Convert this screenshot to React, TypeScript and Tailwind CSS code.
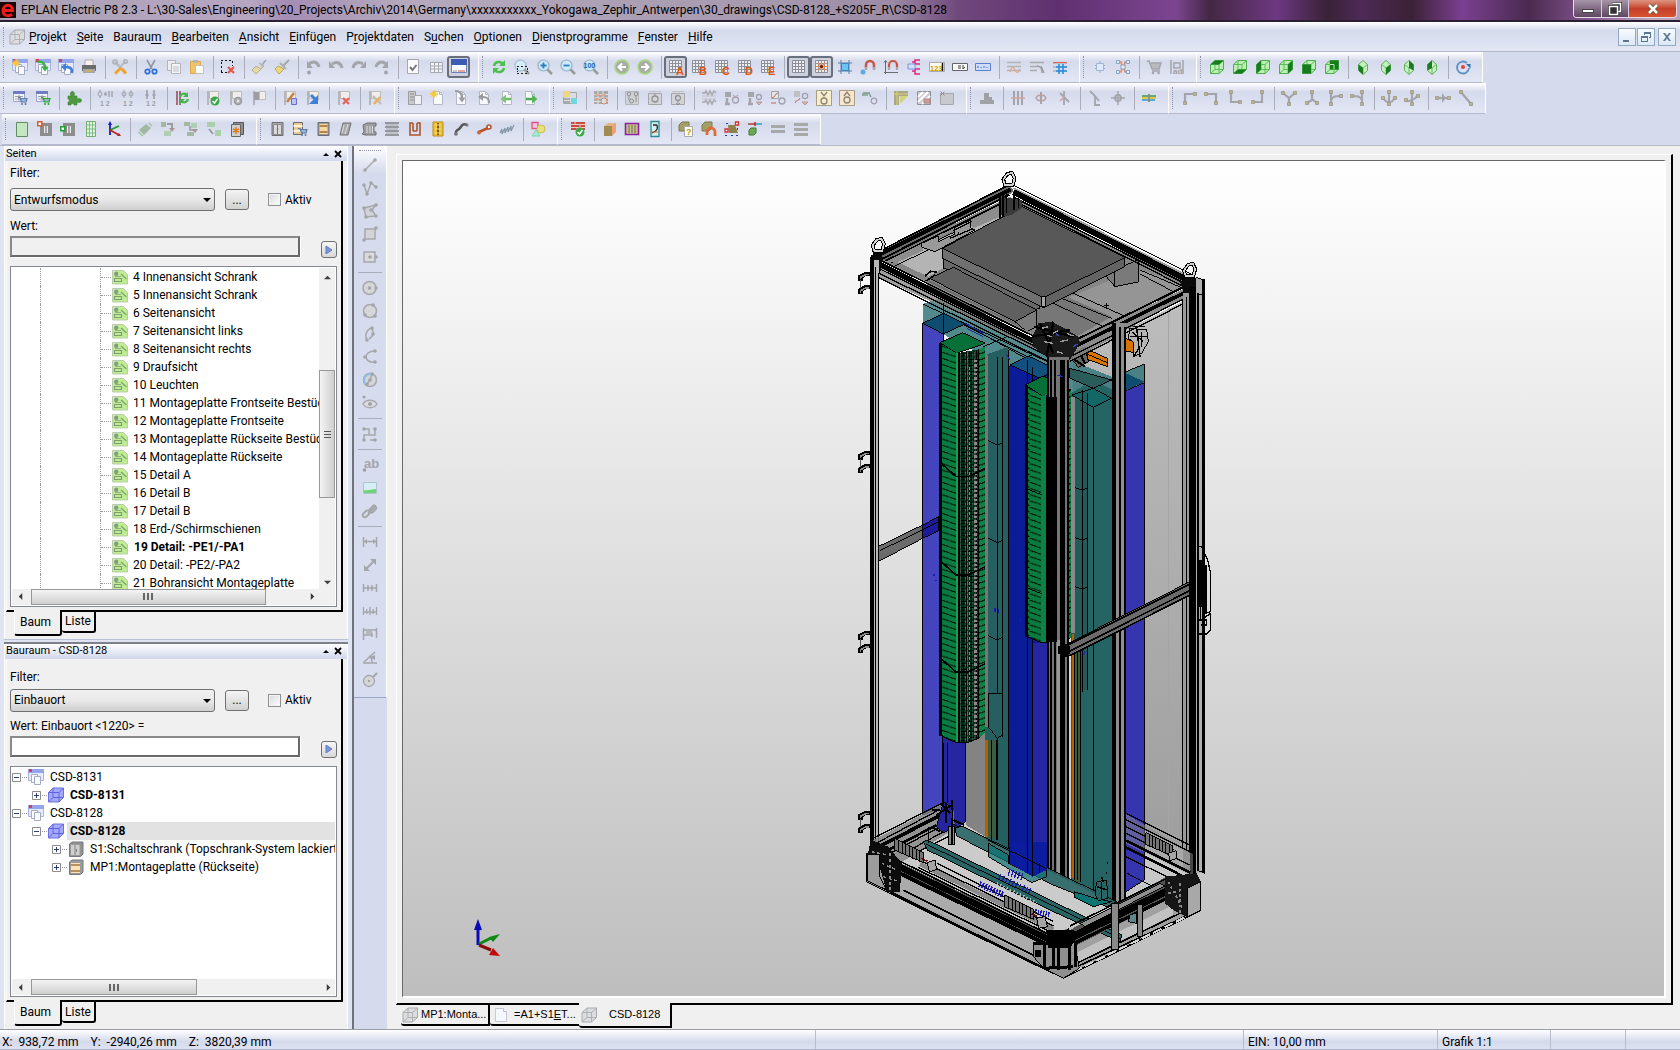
import React from "react";

/* ------------------------------------------------------------------ */
/* Icon drawing helpers: every icon is a list of shapes on a 16px grid */
/* ------------------------------------------------------------------ */

type PathShape = [d: string, fill: string, stroke?: string, width?: number];
type TextShape = { t: string; x: number; y: number; s: number; f: string };
type Shape = PathShape | TextShape;

const N = "none";
const G = "#a3a5ab";
const R = (x: number, y: number, w: number, h: number) => `M${x} ${y}h${w}v${h}h${-w}z`;
const C = (x: number, y: number, r: number) =>
  `M${x - r} ${y}a${r} ${r} 0 1 0 ${2 * r} 0a${r} ${r} 0 1 0 ${-2 * r} 0z`;

const page: Shape[] = [["M3.5 1.500h6l3 3v10h-9z", "#f8f9fc", "#b4b8c2"], ["M9.500 1.500v3h3", N, "#b4b8c2"]];
const windowPages: Shape[] = [
  [R(0.5, 1.5, 15, 10), "#e6eafa", "#a9b5dd"],
  [R(0, 0, 16, 4), "#93a5ec"],
  [R(1, 0, 3, 3), "#d8405a"],
  [R(3.5, 5.5, 6, 8), "#fbfcff", "#a4acc4"],
  [R(6.5, 7.5, 6, 8), "#fbfcff", "#a4acc4"],
];
const grid: Shape[] = [
  [R(1.5, 1.5, 12, 12), "#eceef2"],
  ["M1.5 1.5h12v12h-12zM1.5 4.5h12M1.5 7.5h12M1.5 10.5h12M4.5 1.5v12M7.5 1.5v12M10.5 1.5v12", N, "#8d909a"],
];
const flag: Shape[] = [
  ["M3 1v14", N, "#a9a9a9", 1.5],
  ["M4.500 1.500h9v9l-4-2h-5z", "#efeeea", "#bdbcb6"],
];
const table: Shape[] = [
  [R(1.5, 1.5, 11, 10), "#f3f4fa", "#9aa3cc"],
  [R(1, 1, 12, 3), "#6f7cc4"],
  ["M3 6.500h8M3 9h8M7 5v6", N, "#9a9ca8"],
];
const gridLetter = (t: string): Shape[] => [...grid, { t, x: 8, y: 16, s: 11, f: "#e2560f" }];
const lens = (inner: Shape[]): Shape[] => [
  ["M10 10l5 5", N, "#9a9a9a", 2.5],
  [C(6.5, 6.5, 5.5), "#cfe9f8", "#8fb1c6", 1.2],
  ...inner,
];
const arrowCircle = (d: string): Shape[] => [
  [C(8, 8, 7), "#a9aca6", "#a6d97e", 1.6],
  [d, N, "#ffffff", 2],
];
const deviceBox: Shape[] = [
  ["M1.5 3.500h13v11h-13z", "#d3d4d7", "#a6a6a6"],
  ["M2 1.500h12", N, "#c2c2c2"],
];
const cube = (face: Shape[]): Shape[] => [
  ["M1.5 5.500l4.500-4h8.500v9l-4.500 4h-8.500z", "#bdf0b4", "#4fae4c"],
  ["M1.5 5.500h8.500v9M10 5.500l4.500-4M6 1.500v9M1.5 14.500l4.500-4h8.500", N, "#5cbb58"],
  ...face,
];
const diamond = (face: Shape[]): Shape[] => [
  ["M8 1.500l4.500 4v6l-4.500 4-4.500-4v-6z", "#c6f2bd", "#5fae5c"],
  ["M3.500 5.500l4.500 3.500 4.500-3.500M8 9v6.500", N, "#6cb868"],
  ...face,
];
const wire = (d: string, ends: [number, number][]): Shape[] => [
  [d, N, G, 2.2],
  ...ends.map(([x, y]): Shape => [R(x - 1.5, y - 1.5, 3, 3), "#b9b489", "#98978a", 0.8]),
];
const ghostTree: Shape[] = [[R(1, 2, 6, 5), "#a3a5ab"], ["M3 8v6M1 14h5", N, G, 2.500]];
const nodes = (d: string, pts: [number, number][], fill = N): Shape[] => [
  [d, fill, "#a6a8ac", 1.5],
  ...pts.map(([x, y]): Shape => [C(x, y, 1.8), "#a3a5a9"]),
];
const bars = (ys: number[]): Shape[] => ys.map((y): Shape => [R(1, y, 14, 3), "#a7a9a9"]);
const check: Shape[] = [[C(10, 11, 4.500), "#39a845"], ["M7.500 11l2 2 3-4", N, "#fff", 1.5]];
const cross: Shape[] = [["M7 8l6 6M13 8l-6 6", N, "#e3655c", 2.2]];
const cart = (c: string): Shape[] => [
  ["M6 7.500h2l1.500 4.500h4.500l1-3.500h-6", "#9ab7d8", c, 1.2],
  [C(10, 14, 1), c],
  [C(13.5, 14, 1), c],
];
const orangeNet: Shape[] = [
  ["M3 3h3l1 4v2l-1 4h-3M13 3h-3l-1 4v2l1 4h3", N, "#ea8554", 1.5],
  [R(1.5, 1.5, 3, 3), "#e9f1fb", "#7ea4cf"],
  [R(11.5, 1.5, 3, 3), "#e9f1fb", "#7ea4cf"],
  [R(1.5, 11.5, 3, 3), "#e9f1fb", "#7ea4cf"],
  [R(11.5, 11.5, 3, 3), "#e9f1fb", "#7ea4cf"],
  [R(6, 6, 4, 4), "#e9f1fb", "#8b9bb6"],
];
const tools: Shape[] = [
  ["M3 3l9.500 9.500", N, "#b9bcc2", 2.5],
  [C(3, 3, 2), N, "#aeb2b8", 1.6],
  ["M13.500 2.500l-6 6", N, "#b9bcc2", 2],
  [C(13.5, 2.5, 1.8), N, "#aeb2b8", 1.4],
  ["M9 9l-6 5.500", N, "#f0a32c", 3],
  ["M10 10l4 4.500", N, "#f0a32c", 3],
];

const icons: Record<string, Shape[]> = {
  newProject: [...windowPages, ["M4 0v8M0 4h8M1.5 1.500l5 5M6.500 1.500l-5 5", N, "#f7c63a", 1.3]],
  openProject: [...windowPages, ["M3 3c5-1 7 2 7 6", N, "#35b545", 2.500], ["M6.500 8h7l-3.500 4.500z", "#35b545"]],
  closeProject: [...windowPages, ["M14 14c1-5-3-6-7-6", N, "#3f7fdc", 2.500], ["M8 4v8l-5-4z", "#3f7fdc"]],
  print: [
    [R(4, 1, 8, 6), "#f4f2ea", "#9d9d9d", 0.8],
    [R(1, 6, 14, 6), "#6b6c6e"],
    [R(2, 10, 12, 4), "#a6a7a9"],
    ["M5 12h6", N, "#d7b24b", 1.5],
  ],
  tools,
  cut: [["M4 1l5 9M12 1l-5 9", N, "#8f97a3", 1.6], [C(4.5, 12.5, 2.2), N, "#2f6fd8", 1.8], [C(11.5, 12.5, 2.2), N, "#2f6fd8", 1.8]],
  copy: [[R(1.5, 1.5, 8, 10), "#eceef1", "#b3b5ba"], [R(5.5, 4.500, 9, 10), "#f3f4f6", "#b3b5ba"], ["M7 8h6M7 10h6M7 12h6", N, "#c0c2c6"]],
  paste: [[R(1.5, 2.5, 10, 12), "#f1c46b", "#dba84a"], [R(4, 1, 5, 3), "#b5b5b5"], [R(6.5, 6.5, 8, 8), "#fbfbf8", "#c4c0b4"]],
  clearSel: [
    ["M1 1.500h2m2 0h2m2 0h2M1.500 3v2m0 2v2m0 2v2M1 13.500h2m2 0h2M12.500 2v2m0 2v1", "#fff", "#111"],
    ["M8 8l6 6M14 8l-6 6", N, "#e4574c", 2.2],
  ],
  brushes: [["M15 1l-5 6", N, G, 1.5], ["M5 7l5 3-5 5-4-4z", "#e3d9a6", "#b4ae8e"], ["M8 4l5 3-3 3", "#cfcdbf", "#aaa"]],
  brush: [["M15 1l-6 6", N, G, 1.8], ["M4 7l6 3-5 5-4-5z", "#f0d77c", "#b9a85e"], ["M6 4l6 6", N, "#aeb0b2", 2]],
  undoAll: [["M2 2v7h6z", G], ["M4 5c5-4 9-1 10 3", N, G, 3], [C(4, 13.5, 2), G]],
  undo: [["M1 2v7h6z", G], ["M4 5c5-3 9-1 10 4", N, G, 3]],
  redo: [["M15 2v7h-6z", G], ["M12 5c-5-3-9-1-10 4", N, G, 3]],
  redoAll: [["M14 2v7h-6z", G], ["M12 5c-5-4-9-1-10 3", N, G, 3], [C(12, 13.5, 2), G]],
  docCheck: [[R(2.500, 0.5, 11, 14), "#fafafa", "#a5a7ad"], ["M5 8l2.500 3 4-5", N, "#777", 2]],
  gridSmall: [["M2.500 3.500h12v10h-12zM2.500 7h12M2.500 10h12M6.500 3.500v10M10.500 3.500v10", "#f2f3f6", "#a6a9b0"]],
  windowPane: [
    [R(0.5, 0.5, 15, 13), "#f6f7fb", "#6a7fc0"],
    [R(0, 0, 16, 6), "#3c5cb4"],
    [R(2, 11, 4, 2), "#c9c9c9"],
    [R(7, 11, 7, 2), "#e4a8a0"],
  ],
  refresh: [["M3 7c1-5 7-5 9-2", N, "#4cc04e", 2.500], ["M14 1v6h-6z", "#4cc04e"], ["M13 9c-1 5-7 5-9 2", N, "#4cc04e", 2.500], ["M2 15v-6h6z", "#4cc04e"]],
  zoomWin: [["M10 10l5 5", N, "#9a9a9a", 2.500], [C(6.5, 6.5, 5.5), "#d6ecf8", "#8fb1c6"], ["M3 7.500h2m2 0h2m2 0h2M3 14.500h2m2 0h2m2 0h2M3.500 9v2m0 1v1M13.500 9v2m0 1v1", N, "#222"]],
  zoomIn: lens([["M6.500 3.500v6M3.500 6.500h6", N, "#2b7fc4", 1.800]]),
  zoomOut: lens([["M3.500 6.500h6", N, "#2b7fc4", 1.800]]),
  zoom100: lens([{ t: "100", x: 0.5, y: 9, s: 7, f: "#1d5fa8" }]),
  back: arrowCircle("M12 8h-7M8 4.500l-3.500 3.500 3.500 3.500"),
  forward: arrowCircle("M4 8h7M8 4.500l3.500 3.500-3.500 3.500"),
  gridA: gridLetter("A"),
  gridB: gridLetter("B"),
  gridC: gridLetter("C"),
  gridD: gridLetter("D"),
  gridE: gridLetter("E"),
  grid,
  gridSnap: [...grid, ["M7.500 2v11M2 7.500h11M4 4l7 7M11 4l-7 7", N, "#f08a4c", 1.2], [C(7.5, 7.5, 1.6), "#5a1e00"]],
  frameSel: [["M4 1v14M12 1v14M1 4h14M1 12h14", N, "#5b7fa6"], [R(4.5, 4.5, 7, 7), "#6cc3f0", "#3a86bd"]],
  magnetPt: [["M6 9V6a4 4 0 0 1 8 0v3", N, "#c95445", 2.500], [R(4.700, 8, 2.600, 3), "#aaa"], [R(12.700, 8, 2.600, 3), "#aaa"], [C(3, 13, 2.5), "#5fa8e0"]],
  magnetAxis: [["M2.500 15v-13M1 13.500h14M1 3.500l1.500-2 1.500 2", N, "#6b6b6b"], ["M6 9V6a4 4 0 0 1 8 0v3", N, "#c95445", 2.200], [R(4.900, 8, 2.200, 3), "#aaa"], [R(12.900, 8, 2.200, 3), "#aaa"]],
  netMagenta: [["M6 3h3V1h5M9 5h5M6 12h3v3h5M9 10h5M9 1v4M9 10v5", N, "#e0287e", 1.5], [R(2, 5, 7, 5), "#d5e2ff", "#7d8fe0"]],
  num123: [[R(0.5, 3.500, 15, 9), "#fbfbf2", "#aaa"], { t: "123", x: 1, y: 11.500, s: 7.5, f: "#d0a100" }, ["M13.500 4v8", N, "#111", 1.5]],
  field: [[R(0.5, 4.500, 15, 7), "#fafafa", "#666"], [R(6, 6, 3, 4), "#9a9a9a"], ["M11 6v4l2-2", N, "#444"]],
  ruler: [[R(0.5, 4.500, 15, 7), "#cfdcfa", "#5a7fd0"], ["M3 9v-2M6 9v-1M9 9v-2M12 9v-1", N, "#4a6fc8"]],
  linesWave: [["M1 3.500h14M1 7.500h14M1 11.500h14", N, "#b3b4b6", 1.5], ["M4 13c2-6 3-6 5-2s3 3 5-1", N, "#e5a58a", 1.200]],
  linesRad: [["M1 3.500h14M1 7.500h8M1 11.500h7", N, "#a9abad", 1.500], ["M8 7c4 0 5 3 5 7M12 7l3 7", N, "#a1a1a1", 1.500]],
  linesHash: [["M1 4h14M1 8h14M1 12h14", N, "#b3b4b6", 1.500], ["M1 3.500h14", N, "#e0604a"], ["M7 5v10M11 5v10M4 8h11M4 12h11", N, "#2a8fe0", 1.600]],
  chip: [[R(4.5, 4.500, 7, 7), "#dfe9fb", "#a0b6d8"], ["M8 2v2M8 12v2M3 6.500h1M3 9.500h1M12 6.500h1M12 9.500h1", N, "#9fb1cd"]],
  net: orangeNet,
  cartGray: [["M1 2h2l3 8h7l2-6h-10", "#b9bbbd", G, 1.5], ["M6 12h8", N, G, 1.500], [C(7, 14, 1.300), G], [C(12.5, 14, 1.300), G]],
  labels: [["M2 1v14M14 1v14M5 4h6v5h-6z", N, G, 1.500], { t: "ad", x: 4, y: 15, s: 8, f: "#9b9da1" }],
  cubeTop: cube([["M1.5 5.500l4.500-4h8.500l-4.500 4z", "#157d1b"]]),
  cubeBottom: cube([["M1.5 14.500l4.500-4h8.500l-4.500 4z", "#157d1b"]]),
  cubeLeft: cube([["M1.5 5.500l4.500-4v9l-4.500 4z", "#157d1b"]]),
  cubeRight: cube([["M10 5.500l4.500-4v9l-4.500 4z", "#157d1b"]]),
  cubeFront: cube([[R(1.5, 5.500, 8.500, 9), "#157d1b"]]),
  cubeBack: cube([["M6 1.500h8.500v9h-8.500z", "#157d1b"], ["M6 5.500h4v5", N, "#bdf0b4"]]),
  isoSW: diamond([["M3.500 5.500l4.500 3.500v6.500l-4.500-4z", "#1d7a24"]]),
  isoSE: diamond([["M12.500 5.500l-4.500 3.500v6.500l4.500-4z", "#1d7a24"]]),
  isoNE: diamond([["M8 1.500l4.500 4v6l-4.500-2.500z", "#1d7a24"]]),
  isoNW: diamond([["M8 1.500l-4.500 4v6l4.500-2.500z", "#1d7a24"]]),
  rotate: [["M12 4a6 6 0 1 0 2 5", N, "#5a93c4", 1.800], ["M11 5l4.500 0 0 4.500z", "#2f74b4"], [C(8, 8, 2), "#e83f3f"]],
  tableCart: [...table, ...cart("#5b7ba0")],
  tableCartGreen: [...table, ...cart("#27a22c")],
  puzzle: [["M2 6h3c-1.500-3 0-4.500 1.500-4.500S9 3 8 6h3v3c3-1.500 4.500 0 4.500 1.500S14 13 11 12v3h-3c0-2-3-2-3 0h-3v-3c2 0 2-3 0-3z", "#4c9a3d", "#3b7f30", 0.6]],
  dev1: [[C(3, 4, 2), N, G], ["M3 0v2M3 6v2M7 4h3M8.500 2v4M12 1v6M15 1v6", N, G, 1.500], { t: "1 2", x: 3, y: 16, s: 7, f: "#9d9fa4" }],
  dev2: [[C(4, 4, 2), N, G], [C(11, 4, 2), N, G], ["M4 0v8M11 0v8", N, G], { t: "1 2", x: 3, y: 16, s: 7, f: "#9d9fa4" }],
  dev3: [["M4 0v9M11 0v9M2.500 5h3M9.500 5h3M4 3v4M11 3v4", N, G, 1.800], { t: "1 2", x: 3, y: 16, s: 7, f: "#9d9fa4" }],
  syncRed: [["M3 1v14M6 1v14", N, "#9c4450", 1.500], ["M6 7c1-4 5-4 7-2M14 9c-1 4-5 4-7 2", N, "#44b548", 2.200], ["M14 2v5h-5zM6 14v-5h5z", "#44b548"]],
  flagCheck: [...flag, ...check],
  flagGear: [...flag, [C(10, 11, 3.5), "#b5b5b5", "#9a9a9a", 1.5], [C(10, 11, 1.200), "#e8e8e8"]],
  flagDark: [["M3 1v14", N, G, 1.5], [R(3, 2, 7, 8), "#9c9ea2"], [R(8.500, 1.500, 6, 8), "#efeeea", "#bdbcb6"]],
  flagEdit: [...flag, ["M5 12l7-9", N, "#c7813b", 2.500], [R(9.500, 8.500, 5, 6), "#b9c3ff", "#6d6dcf"]],
  flagArrow: [...flag, ["M6 5l5 5", N, "#3f7fdc", 3], ["M13 5v9h-9z", "#3f7fdc"]],
  flagDel: [...flag, ...cross],
  flagTools: [...flag, ["M6 6l8 8", N, "#b9bcc2", 2.200], ["M13 7l-6 7", N, "#f0b14a", 2.500]],
  navTree: [[R(1.5, 1.500, 7, 13), "#c9cacc", "#9b9da1"], ["M3 4h4M3 7h4M3 10h4", N, "#888a8e"], [R(7.500, 5.500, 7, 9), "#f0f1f4", "#a5a7ad"]],
  pageNew: [...page, ["M4 0v8M0 4h8M1.500 1.500l5 5M6.500 1.500l-5 5", N, "#f7c63a", 1.300]],
  pageDown: [...page, ["M2 1c5 0 7 3 7 7", N, "#999b9f", 2.200], ["M5.500 7.500h7l-3.500 5z", "#999b9f"]],
  pageUp: [...page, ["M13 13c0-5-2-6-6-6", N, "#999b9f", 2.200], ["M7 3v8l-5-4z", "#999b9f"]],
  pagePrev: [...page, ["M12 9h-6", N, "#6fb96e", 2.500], ["M7 4.500v9l-5.500-4.500z", "#7cc47a"]],
  pageNext: [...page, ["M4 9h7", N, "#4fab4f", 2.500], ["M10 4.500v9l5.500-4.500z", "#55b455"]],
  macroBox: [[R(1.5, 2.500, 13, 11), "#dcdde0", "#a6a6a6"], [R(1, 1, 7, 6), "#f0d67e"], ["M2 9h6M2 12h6", N, "#9a9a9a", 1.500], [R(9, 8, 6, 6), "#74d6dd"]],
  tableOrange: [["M1 1h14v13h-14z", "#a6a8ac"], ["M1 4.500h14M1 8h14M1 11.500h14M5 1v13M10 1v13", N, "#e4e5e8"], ["M2 5h5M8 5h5M2 9h4", N, "#e5a27c", 1.500], [C(11, 11, 3), "#ddd", "#cc8e6e"]],
  boxFour: [["M1.5 1.500h13v13h-13z", "#d0d1d4", "#b4b6ba"], [C(5, 4, 1.800), N, "#8f9196"], [C(12, 4, 1.800), N, "#8f9196"], [C(7.500, 11, 2), N, "#8f9196"], ["M5 6v4M12 6v6", N, "#8f9196"]],
  boxGear: [...deviceBox, [C(8, 9, 3), N, "#8f9196", 1.300], ["M8 3v3", N, "#8f9196"]],
  boxGear2: [...deviceBox, [C(8, 8, 2.500), N, "#8f9196", 1.300], ["M8 10v5M6 13l2 2 2-2", N, "#8f9196"]],
  connGhost: [["M1 3h3l1-2 2 4 2-4 2 4 2-4 2 2M1 12h3l1-2 2 4 2-4 2 4 2-4 2 2", N, "#a6a8ac", 1.500], ["M1 6h14M1 9h14", N, "#c3c4c8"]],
  treeDev1: [...ghostTree, [C(11.5, 10, 3), N, "#a0a0b0", 1.300], ["M9 5l2.500 2 2.500-2", N, "#c09a98"]],
  treeDev2: [...ghostTree, [C(12, 7, 2.500), N, "#a0a0b0", 1.300], ["M9 12l3 3 3-3z", "#d6b4b0", "#b99"]],
  treeDev3: [[R(1.500, 1.500, 7, 7), "#e5e5e8", G], ["M2 8c3 0 3-5 6-5M1 13h5", N, "#c0665a"], [C(12, 11, 3), N, "#a0a0b0", 1.300]],
  treeDev4: [[R(1, 1, 6, 6), "#bfc0c4"], ["M2 13c0-3 5-2 5-5", N, "#c0665a"], [C(12, 6, 2.600), N, "#a0a0b0", 1.300], ["M9 12l3 3 3-3z", "#d6b4b0", "#b99"]],
  beigeIn: [[R(0.5, 0.500, 15, 15), "#f8eecd", "#a79f85"], [C(8, 11, 3), N, "#8a8474", 1.300], ["M5 2l3 4 3-4", N, "#8a8474", 1.300]],
  beigeOut: [[R(0.5, 0.500, 15, 15), "#f8e5cd", "#a79f85"], [C(8, 10, 3), N, "#8a8474", 1.300], ["M5 6l3-4 3 4", N, "#8a8474", 1.300]],
  coil: [["M1 3v3M3 3v3M5 3v3M1 3h7M7 3l2 4", N, "#7da08b", 1.500], [C(12, 11, 2.800), N, "#a0a0b0", 1.300]],
  panelTL: [[R(1, 1, 14, 5), "#a8a88c"], [R(1, 1, 5, 14), "#a8a88c"], ["M1 4h14M4 1v14", N, "#dfd26a"], ["M7 14l7-7v-1h-7z", "#d3d27f"]],
  hatchBox: [[R(1.500, 1.500, 13, 13), "#cfcfd2", "#8f9196"], ["M2 12l10-10M2 7l5-5M6 14l8-8", N, "#fff", 2], [R(8, 9, 6, 4), "#d39a94", "#a88"]],
  dashedBox: [["M1.500 3.500h13v11h-13z", "#c8c9cd", "#a6a8ad"], ["M1.500 1.500l4 4M5.500 1.500l-4 4", N, "#8a8c90"]],
  stack: [["M5 3h5v4h3v3h2v4h-14v-4h4z", "#9fa1a5"]],
  pin3: [["M4 1v14M8 1v14M12 1v14", N, G, 2], ["M1 8h14", N, "#d3a49e", 1.500]],
  pin1: [["M8 2v12", N, G, 2], ["M5 5.500h6l2 2.500-2 2.500h-6l-2-2.500z", N, "#b9a09e", 1.5]],
  pinSlash: [["M8 1v14M4 3l9 9", N, G, 1.800], ["M4 11l4-4", N, "#d3a49e", 1.500]],
  branchK: [["M3 1l5 5v9h5M8 6l4 5", N, G, 1.800]],
  target: [[C(8, 8, 3), N, G, 1.800], ["M8 1v14M1 8h14", N, G, 1.500]],
  cableColor: [["M1 6h6M9 6h6", N, "#3a9a50", 1.500], ["M1 8h14", N, "#e8c01e", 1.600], ["M1 10h6M9 10h5", N, "#2a9ac8", 1.500], [R(7, 4, 2, 8), "#8f8f8f"]],
  w1: wire("M4 14v-10h9", [[4, 13], [14, 4]]),
  w2: wire("M3 4h9v10", [[2, 4], [12, 13]]),
  w3: wire("M4 2v10h9", [[4, 2], [13, 12]]),
  w4: wire("M12 2v10h-9", [[12, 2], [3, 12]]),
  w5: wire("M2 3l6 5 6-5M8 8v6", [[2, 3], [14, 3], [8, 14]]),
  w6: wire("M8 2v8l-5 3M8 9l5 4", [[8, 2], [3, 13], [13, 13]]),
  w7: wire("M4 2v12M4 10c2-4 5-4 9-4", [[4, 2], [4, 14], [14, 6]]),
  w8: wire("M12 2v12M12 10c-2-4-5-4-9-4", [[12, 2], [12, 14], [2, 6]]),
  w9: wire("M8 2v12M3 8c0 3 3 4 5 4s5-1 5-4", [[8, 2], [8, 14], [2, 8], [14, 8]]),
  w10: wire("M8 2v12M3 11c4 0 8-2 10-5", [[8, 2], [8, 14], [2, 10], [14, 6]]),
  w11: [...wire("M2 8h12", [[2, 8], [14, 8]]), ["M7 3l4 5-4 5z", G]],
  w12: wire("M3 2l10 12", [[3, 2], [13, 14]]),
  plate: [[R(2.500, 1.500, 11, 14), "#c4e6c1", "#5f8f61"]],
  placeRed: [[R(3, 2, 12, 13), "#8d8d8d"], [R(7, 5, 4, 7), "#e8e8e8"], ["M9 5v7", N, "#666"], [R(0.800, 0.800, 4, 4), "#fff", "#d95a29", 1.500]],
  placeGreen: [[R(3, 2, 12, 13), "#8d8d8d"], [R(7, 5, 4, 7), "#e8e8e8"], ["M9 5v7", N, "#666"], [R(0.800, 5.800, 4, 4), "#fff", "#1fa12b", 1.500]],
  greenGrid: [[R(3.5, 0.500, 9, 15), "#e3f5e0", "#6fae72"], ["M3.500 4h9M3.500 8h9M3.500 12h9M6.500 0.500v15M9.500 0.500v15", N, "#7fbd82"]],
  axes: [["M4 14v-12", N, "#1b1bc0", 1.800], ["M2 4l2-4 2 4z", "#1b1bc0"], ["M4 9l9-4", N, "#1f9a2a", 1.800], ["M4 9l9 5", N, "#c0221c", 1.800], ["M15 15l-4 0 2-3z", "#c0221c"]],
  ghostRot: [["M2 9l7-6 5 4-7 7z", "#a3b8a3"], ["M1 11l5 4M12 2l3 3", N, "#9dc79f", 1.500]],
  ghostDown: [[R(1, 1, 5, 5), "#a3b8a3"], [R(4, 10, 7, 5), "#b0ceb2"], ["M7 3h5v5", N, "#9b9d9f", 2], ["M9 7h6l-3 4z", "#a89690"]],
  ghostDown2: [[R(1, 1, 6, 4), "#a3b8a3"], [R(8, 2, 6, 5), "#b0ceb2"], [R(4, 11, 7, 4), "#a3b8a3"], ["M7 5v4h5", N, "#999", 1.500], ["M9 8h6l-3 4z", "#a89690"]],
  ghostMove: [[R(1, 1, 8, 5), "#a9d0ab"], [R(9, 9, 6, 6), "#a9d0ab"], ["M3 8l4 5", N, "#999", 1.800]],
  cabinetOr: [["M4.500 1.500h10v12h-10z", "#8e8e8e", "#555"], ["M2.500 3.500h9v12h-9z", "#cfcfcf", "#666"], ["M7 6v7M4 8l6 3M10 8l-6 3", N, "#e27a1e", 1.500]],
  cabinet: [[R(3, 1.500, 11, 13), "#a9aaac", "#6c6d70"], [R(4.5, 3.500, 8, 10), "#d8d8da", "#8a8b8e"], ["M8.500 4v9M7.500 8h2", N, "#77787b"]],
  mountCart: [[R(1.5, 1.500, 9, 12), "#e9c897", "#6c6d70"], ["M1.500 5h9M1.500 10h9", N, "#fff4d8", 2], ...cart("#5b7ba0")],
  mount: [[R(3, 1.500, 11, 13), "#999a9c", "#6c6d70"], [R(4.5, 3, 8, 10), "#f4d9a6"], ["M4.500 5h8M4.500 11h8", N, "#a06a2c", 1.5]],
  slab: [["M5 2h8l-3 12h-8z", "#a8a9ab", "#707174"], ["M6 4l-2 8M10 3l-3 10", N, "#e0e0e0"]],
  column: [["M2 4l4-2h9v3h-2v6h2v3h-11l-3-1 2-2z", "#9d9ea0", "#707174"], ["M6 5v7M9 5v7M11.500 5v7", N, "#dcdcdc"]],
  rails: [["M1 2h14M1 6h14M1 10h14M1 14h14", N, "#808184", 1.500], ["M2 4h12M2 8h12M2 12h12", N, "#a5a5a8", 1]],
  uprofile: [["M6 2H3v12h10V2h-3M6 2v8M10 2v8M6 10h4", N, "#a9572e", 1.600]],
  ladder: [[R(3, 1, 10, 14), "#f0c22e", "#b98b1a"], ["M8 2v12", N, "#7b5a10", 2], ["M5 4h6M5 8h6M5 12h6", N, "#fbe489"]],
  hose: [["M3 14c-1-6 2-4 4-7s3-5 7-3", N, "#555", 2.500], [C(3, 13, 1.800), "#777"], [C(14, 4, 1.500), "#777"]],
  bolt: [["M3 11l9-4", N, "#b4532a", 2.500], [C(3, 11.500, 2), "#c8693c"], [C(13, 6, 2), "#fff", "#b4532a", 1.600]],
  spring: [["M1 12l2-4v5l3-6v5l3-6v5l3-6v5l3-6", N, "#8097a5", 1.200]],
  shapes: [[R(2, 1.500, 6, 6), "#f7c8da", "#e0508a", 1.300], [C(11, 8, 4), "#e6e07e", "#c8c050"], ["M2 15l4-6 4 6z", "#a8ecd0", "#7ed0ae"]],
  brickOk: [["M1 1h14v8h-14z", "#c64b43"], ["M1 3.500h14M1 6.500h14M5 1v3M10 4v3M7 7v2", N, "#f3c9c4"], ...check],
  boxOpen: [["M3 5l4-3h8l-3 3z", "#e4b486"], [R(3, 5, 8, 10), "#a08c50"], ["M11 5l4-3v9l-4 4z", "#f0a070"]],
  purpleCab: [[R(1.500, 2.500, 13, 11), "#c9c08f", "#8d1fa0", 1.600], ["M5 4v8M8 4v8M11 4v8", N, "#6e6848"]],
  tealCab: [[R(4, 0.500, 8, 15), "#d5efef", "#2d8a94", 1.300], ["M6 4h4M5 12c5-2 6-4 5-8", N, "#222", 1.300], ["M5 11h6", N, "#d96a2a"]],
  cubeHelp: [["M1 4l3-3h7v6l-3 3h-7z", "#a39f65", "#7d7a4c"], [R(6.500, 5.500, 8, 10), "#fffef0", "#aaa"], { t: "?", x: 8, y: 14, s: 9, f: "#b79a00" }],
  cubeMagnet: [["M1 4l3-3h7v6l-3 3h-7z", "#a39f65", "#7d7a4c"], ["M6 14v-3a4 4 0 0 1 8 0v4", N, "#e06a38", 2.800]],
  pointsRed: [["M4 4h7l3 8h-9z", "#8d8150"], ["M2 15v-1M8 15v-1M13 15v-1M3 3v-1M13 8h1", N, "#1c3fb4", 2], [R(1, 8, 3, 3), "#fff", "#d03030", 1.300], [R(11.500, 1, 3, 3), "#fff", "#d03030", 1.300]],
  cubeLine: [["M1 3h7", N, "#b3452f", 1.500], ["M8 3h7", N, "#2e9ad0", 1.500], ["M8 1v4", N, "#c22", 1.500], ["M2 9l2-2h5v5l-2 2h-5z", "#6da854", "#3f7a2c"]],
  barsTwo: bars([4, 9]),
  barsThree: bars([2, 7, 12]),
  line: nodes("M3 13L13 3", [[3, 13], [13, 3]]),
  polyline: nodes("M2 5l3 9 4-11 5 4", [[2, 5], [5, 14], [9, 3], [14, 7]]),
  polygon: nodes("M2 5l12-3-4 5 4 6-10 1-1-4z", [[2, 5], [14, 2], [14, 13], [4, 14], [9, 7]], "#d0d2d6"),
  rect: nodes("M3 3h10v10h-10z", [[2, 14], [14, 2]], "#d3d4d6"),
  rectC: nodes("M2 3h11v10h-11z", [[8, 8], [14, 8]], "#d8dadd"),
  circle: nodes(C(7.5, 8, 6.5), [[7.5, 8], [14, 8]], "#d5d6d8"),
  circle3: nodes(C(8, 8, 6.5), [[11, 2], [3, 12], [13, 13]], "#d5d6d8"),
  arc3: nodes("M10 2c-5 1-8 7-5 12M7 13c5-3 5-7 3-10", [[10, 2], [5, 14], [11, 8]]),
  arc: nodes("M13 2c-6 0-9 3-9 6s4 6 9 5", [[13, 2], [3, 8], [13, 13]]),
  sector: [...nodes(C(8, 8, 6.5), [[10, 2], [5, 12], [8, 8]], "#d5d6d8"), ["M10 2L8 8l-3 4", N, G, 1.5], ["M3 12c-2-5 0-9 6-10", N, "#8ac4ee", 1.500]],
  ellipse: [["M1 9c3-5 11-5 14 0-3 5-11 5-14 0z", "#dcdde0", "#a6a8ac", 1.300], [C(8, 9, 2), "#9fa1a6"], [C(2, 2, 1.500), "#9fa1a6"]],
  spline: nodes("M2 14v-5h11V3M2 3h5v5M13 14h-5", [[2, 14], [2, 3], [13, 3], [13, 14]]),
  text: [{ t: "ab", x: 2, y: 11, s: 13, f: "#a3a5ab" }, [C(2.500, 13, 1.800), "#9c9ea3"]],
  image: [[R(1.500, 2.500, 13, 11), "#d6eef8", "#b2c4cc"], ["M2 10c4 1 8-1 12-1v4h-12z", "#6cd476"]],
  link: [["M4 14l3-3a2 2 0 0 0-3-3l-2 2a2 2 0 0 0 2 4M9 8l3-3a2 2 0 0 1 2-2M12 2l-4 4a2 2 0 0 0 3 3l3-3a3 3 0 0 0-2-4M6 10l4-4", N, "#a3a5a9", 1.800]],
  dimH: [["M1.500 3v10M14.500 3v10M2 7.500h12", N, G, 1.500], ["M2 7.500l3-2.500v5zM14 7.500l-3-2.500v5z", G]],
  dimDiag: [["M4 12l8-8", N, G, 2], ["M14 2v6l-6-6zM2 14v-6l6 6z", G]],
  dimChain: [["M1.500 4v8M6 5v6M10 5v6M14.500 4v8M2 8h12", N, G, 1.500]],
  dimCont: [["M1.500 4v8M4.700 6v5M8 4v8M11.200 6v5M14.500 4v8M2 9h12", N, G, 1.300]],
  dimBase: [["M1.500 2v12M14.500 2v10M2 4h12M2 9h8M10 7v4", N, G, 1.500], [R(4, 5, 6, 3), "#b5b7bb"]],
  dimAngle: [["M1 14h14M2 13L13 3M10 13c0-4-1-5-3-6", N, G, 1.500], ["M13 6v5l-5-3z", G]],
  dimRadius: [[C(7, 9, 5.500), "#d5d6d8", G, 1.300], [C(7, 9, 1.200), G], ["M15 1l-4 4", N, G, 2]],
  pageGreen: [
    ["M0.500 1.500h11l4 4v9.500h-15z", "#c0ec94", "#b9cda8"],
    ["M1 2h4v3h-4z", "#d9e6cf"],
    [C(4.2, 4.8, 2.2), "#7f9f74"],
    ["M9 5l5.500 5", N, "#7da070", 1.2],
    ["M2.500 9.500h7v3h-7z", N, "#7da070", 1.2],
    ["M3 7.500h6", N, "#8fb083"],
  ],
  cubeBlue: [["M0.500 5.500l4.500-4.500h10.500v9.500l-4.500 4.500h-10.500z", "#a5a9fb", "#6b70e6"], ["M0.500 5.500h10.500v9.500M11 5.500l4.500-4.500M5 1v9.500h10.500M0.500 15l4.500-4.500", N, "#5d62e0"]],
  cubeGhost: [["M1 5.500l5-4.500h9.500v9.500l-5 4.500h-9.500z", "#dcdddf", "#a9aaae"], ["M1 5.500h9.500v9.500M10.500 5.500l5-4.500M6 1v9.500h9.500M1 15l5-4.500", N, "#b0b1b5"]],
  project: windowPages,
  cabinetTree: [["M1.500 3l2.500-2h11v12l-2.500 2.500h-11z", "#8f9092", "#77787a"], [R(2.500, 3.500, 9.500, 11), "#cfcfd0", "#999"], ["M7 4v10M8.500 8v3", N, "#808184"]],
  mountTree: [["M1.500 3l2.500-2h11v12l-2.500 2.500h-11z", "#9a9b9d", "#77787a"], [R(3, 4, 9, 10), "#fbe3b2"], ["M3 6h9M3 12h9", N, "#a07a3c", 1.500]],
  blankPage: [["M2.500 1.500h8l3 3v10h-11z", "#f4f8fd", "#c3cad6"], ["M10.500 1.500v3h3", "#fff", "#b8c2d0"]],
};

function Icon({ name, className = "size-4" }: { name: string; className?: string }) {
  return (
    <svg viewBox="0 0 16 16" aria-hidden="true" className={`${className} shrink-0 overflow-visible`}>
      {(icons[name] ?? []).map((s, i) =>
        Array.isArray(s) ? (
          <path key={i} d={s[0]} fill={s[1]} stroke={s[2]} strokeWidth={s[3] ?? 1} />
        ) : (
          <text key={i} x={s.x} y={s.y} fontSize={s.s} fill={s.f} fontWeight="bold" fontFamily="Liberation Sans, sans-serif">
            {s.t}
          </text>
        ),
      )}
    </svg>
  );
}

/* ------------------------------------------------------------------ */
/* Toolbars                                                            */
/* ------------------------------------------------------------------ */

const row1 = [
  "newProject openProject closeProject print | tools | cut copy paste | clearSel | brushes brush | undoAll undo redo redoAll | docCheck gridSmall windowPane*",
  "refresh zoomWin zoomIn zoomOut zoom100 | back forward | gridA* gridB gridC gridD gridE | grid* gridSnap* frameSel magnetPt magnetAxis netMagenta num123 field ruler | linesWave linesRad linesHash",
  "chip net | cartGray labels",
  "cubeTop cubeBottom cubeLeft cubeRight cubeFront cubeBack | isoSW isoSE isoNE isoNW | rotate",
];
const row2 = [
  "tableCart tableCartGreen | puzzle | dev1 dev2 dev3 | syncRed | flagCheck flagGear flagDark | flagEdit flagArrow | flagDel | flagTools",
  "navTree pageNew pageDown pageUp pagePrev pageNext",
  "macroBox | tableOrange | boxFour boxGear boxGear2 | connGhost treeDev1 treeDev2 treeDev3 treeDev4 beigeIn beigeOut coil | panelTL hatchBox dashedBox",
  "stack | pin3 pin1 pinSlash | branchK target | cableColor",
  "w1 w2 w3 w4 | w5 w6 w7 w8 | w9 w10 | w11 w12",
];
const row3 = [
  "plate placeRed placeGreen greenGrid axes | ghostRot ghostDown ghostDown2 ghostMove cabinetOr",
  "cabinet mountCart mount slab column rails uprofile ladder hose bolt spring | shapes",
  "brickOk | boxOpen purpleCab tealCab | cubeHelp cubeMagnet pointsRed cubeLine barsTwo barsThree",
];
const drawTools =
  "line polyline polygon rect rectC | circle circle3 arc3 arc sector ellipse | spline | text image link | dimH dimDiag dimChain dimCont dimBase dimAngle dimRadius";

function ToolGroup({ spec }: { spec: string }) {
  return (
    <div className="flex h-[31px] items-center border-r border-b border-r-white border-b-[#b4b8ca] bg-linear-to-b from-white via-[#d5daec] via-30% to-[#e3e7f5] pr-2">
      <span className="mr-1 ml-[3px] h-[22px] w-px border-l border-dotted border-[#8f94a8]" />
      {spec.split(" ").map((n, i) =>
        n === "|" ? (
          <span key={i} className="mr-[2px] ml-[5px] h-[23px] w-px bg-[#abaeba]" />
        ) : n.endsWith("*") ? (
          <button
            key={i}
            aria-label={n.slice(0, -1)}
            aria-pressed="true"
            className="flex h-[22px] w-[23px] items-center justify-center rounded-[3px] border-2 border-[#6a6f7c] bg-[#cdd1de]"
          >
            <Icon name={n.slice(0, -1)} />
          </button>
        ) : (
          <button key={i} aria-label={n} className="flex h-[22px] w-[23px] items-center justify-center">
            <Icon name={n} />
          </button>
        ),
      )}
    </div>
  );
}

function ToolRow({ groups, className = "" }: { groups: string[]; className?: string }) {
  return (
    <div role="toolbar" className={`flex h-[31px] ${className}`}>
      {groups.map((g) => (
        <ToolGroup key={g} spec={g} />
      ))}
    </div>
  );
}

/* ------------------------------------------------------------------ */
/* Title and menu bars                                                 */
/* ------------------------------------------------------------------ */

function TitleBar() {
  return (
    <header className="flex h-[22px] items-start border-b-2 border-b-[#2b1f33] bg-[linear-gradient(to_right,#a9a1b3_0%,#b7a6c2_15%,#a48db4_17%,#b5a9bd_24%,#a79aae_45%,#9c8ba6_53%,#70497c_57%,#5f3070_63%,#7c4590_70%,#432843_72%,#6d3882_76%,#3a2238_79%,#4d2a56_81%,#3b2136_84%,#7a4090_87%,#4a2a50_91%,#8a5a96_95%,#b9a3b8_98%)]">
      <div className="flex h-5 min-w-0 flex-1 items-center">
        <svg viewBox="0 0 16 16" className="size-4 shrink-0" role="img" aria-label="EPLAN">
          <path d="M0 0h16v16h-16z" fill="#1a0505" />
          <path d="M3.500 8.500h9c0-7-9-7-9.500 0 0 6 6 6 9 4" fill="none" stroke="#f01c1c" strokeWidth="2.800" />
        </svg>
        <h1 className="ml-[5px] truncate text-[12px] leading-5 text-black">
          EPLAN Electric P8 2.3 - L:\30-Sales\Engineering\20_Projects\Archiv\2014\Germany\xxxxxxxxxxx_Yokogawa_Zephir_Antwerpen\30_drawings\CSD-8128_+S205F_R\CSD-8128
        </h1>
      </div>
      <div className="mr-[3px] flex h-[18px] overflow-hidden rounded-b-[4px] border border-t-0 border-[#e5dce8]">
        <button aria-label="Minimieren" className="flex w-7 items-end justify-center border-r border-[#d9cddb] bg-linear-to-b from-[#a695a8] to-[#5e4762] pb-1">
          <span className="h-1 w-3 border border-[#444] bg-white" />
        </button>
        <button aria-label="Wiederherstellen" className="flex w-[27px] items-center justify-center border-r border-[#d9cddb] bg-linear-to-b from-[#a695a8] to-[#5e4762]">
          <svg viewBox="0 0 14 14" className="size-[14px]">
            <path d="M4.500 1.500h8v8h-2M1.500 4.500h8v8h-8zM4.500 7.500h2v2h-2z" fill="none" stroke="#333" strokeWidth="3" />
            <path d="M4.500 1.500h8v8h-2M1.500 4.500h8v8h-8z" fill="none" stroke="#fff" strokeWidth="1.500" />
          </svg>
        </button>
        <button aria-label="Schließen" className="flex w-[47px] items-center justify-center bg-linear-to-b from-[#dd9480] via-[#c4402a] to-[#d9532f]">
          <svg viewBox="0 0 12 12" className="size-3">
            <path d="M2 2l8 8M10 2l-8 8" stroke="#553" strokeWidth="4" />
            <path d="M2 2l8 8M10 2l-8 8" stroke="#fff" strokeWidth="2.500" />
          </svg>
        </button>
      </div>
    </header>
  );
}

const menus: [string, string, string][] = [
  ["", "P", "rojekt"],
  ["", "S", "eite"],
  ["Baurau", "m", ""],
  ["", "B", "earbeiten"],
  ["", "A", "nsicht"],
  ["", "E", "infügen"],
  ["P", "r", "ojektdaten"],
  ["S", "u", "chen"],
  ["", "O", "ptionen"],
  ["", "D", "ienstprogramme"],
  ["", "F", "enster"],
  ["", "H", "ilfe"],
];

const mdiGlyphs: [string, string][] = [
  ["Fenster minimieren", "M3 10h6v2h-6z"],
  ["Fenster wiederherstellen", "M5 2h7v6h-2v-1h1v-3h-5v1h-1zM2 6h7v6h-7zM3 8v3h5v-3z"],
  ["Fenster schließen", "M3 3h2l2 2.500 2-2.500h2l-3 4 3 4h-2l-2-2.500-2 2.500h-2l3-4z"],
];

function MenuBar() {
  return (
    <nav className="flex h-[30px] items-center border-b border-[#b4b8ca] bg-linear-to-b from-white via-[#d5daec] via-30% to-[#e3e7f5] pl-[3px]">
      <span className="h-5 w-px border-l border-dotted border-[#8f94a8]" />
      <Icon name="cubeGhost" className="ml-[5px] size-4" />
      <div className="ml-1 flex gap-[10px] text-[12px] leading-5">
        {menus.map(([a, u, b]) => (
          <button key={a + u + b} className="whitespace-nowrap">
            {a}
            <span className="underline underline-offset-2">{u}</span>
            {b}
          </button>
        ))}
      </div>
      <div className="mr-1 ml-auto flex gap-px">
        {mdiGlyphs.map(([label, d]) => (
          <button key={label} aria-label={label} className="flex size-[18px] items-center justify-center border border-[#93a9c2] bg-linear-to-b from-[#f7fbff] to-[#dbe8f6] last:ml-[2px]">
            <svg viewBox="0 0 14 14" className="size-[14px]">
              <path d={d} fill="#5d7690" fillRule="evenodd" />
            </svg>
          </button>
        ))}
      </div>
    </nav>
  );
}

/* ------------------------------------------------------------------ */
/* Docked panels                                                       */
/* ------------------------------------------------------------------ */

function Arrow({ dir }: { dir: "up" | "down" | "left" | "right" }) {
  const d = { up: "M0 6l4-4 4 4z", down: "M0 2h8l-4 4z", left: "M6 0v8l-4-4z", right: "M2 0v8l4-4z" }[dir];
  return (
    <svg viewBox="0 0 8 8" className="size-[7px]">
      <path d={d} fill="#3c3c3c" />
    </svg>
  );
}

function HScroll({ thumb }: { thumb: string }) {
  return (
    <div className="flex h-4 items-stretch bg-[#f0f0f0]">
      <span className="flex w-[17px] items-center justify-center">
        <Arrow dir="left" />
      </span>
      <div className="flex flex-1">
        <div className={`ml-[2px] flex items-center justify-center gap-px border border-[#989898] bg-linear-to-b from-[#f4f4f4] to-[#cfcfcf] ${thumb}`}>
          <i className="mr-px h-[7px] w-[2px] bg-[#666]" />
          <i className="mr-px h-[7px] w-[2px] bg-[#666]" />
          <i className="h-[7px] w-[2px] bg-[#666]" />
        </div>
      </div>
      <span className="flex w-[14px] items-center justify-center">
        <Arrow dir="right" />
      </span>
    </div>
  );
}

function Panel(props: {
  id: string;
  title: string;
  filter: string;
  value: string;
  disabled?: boolean;
  grow: string;
  labelPad: string;
  comboGap: string;
  valueGap: string;
  children: React.ReactNode;
}) {
  const { id, title, filter, value, disabled, grow, labelPad, comboGap, valueGap, children } = props;
  return (
    <section className={`flex min-h-0 flex-col border-x border-white bg-[#f0f0f0] pr-1 ${grow}`}>
      <div className="-mr-1 flex h-[15px] shrink-0 items-center bg-linear-to-b from-white to-[#d0d7eb] pl-px">
        <h2 className="text-[11px] leading-[14px]">{title}</h2>
        <button aria-label="Minimieren" className="ml-auto">
          <svg viewBox="0 0 8 8" className="size-2"><path d="M1 6l3-3 3 3z" fill="#000" /></svg>
        </button>
        <button aria-label="Schließen" className="mr-[5px] ml-1">
          <svg viewBox="0 0 8 8" className="size-2"><path d="M1 1l6 6M7 1l-6 6" stroke="#000" strokeWidth="1.800" /></svg>
        </button>
      </div>
      <div className={`ml-px flex min-h-0 flex-1 flex-col border-r-2 border-b-2 border-l border-r-black border-b-black border-l-white pr-1 pb-[3px] pl-[3px] text-[12px] ${labelPad}`}>
        <label htmlFor={`${id}-filter`} className="leading-4">Filter:</label>
        <div className={`flex items-center ${comboGap}`}>
          <div className="relative h-[23px] w-[205px]">
            <select id={`${id}-filter`} className="h-full w-full appearance-none rounded-[3px] border border-[#707070] bg-linear-to-b from-[#f2f2f2] via-[#e8e8e8] to-[#cfcfcf] pl-[3px]">
              <option>{filter}</option>
            </select>
            <svg viewBox="0 0 8 4" className="pointer-events-none absolute top-[10px] right-1 h-1 w-2"><path d="M0 0h8l-4 4z" /></svg>
          </div>
          <button className="ml-[10px] h-[21px] w-6 rounded-[3px] border border-[#707070] bg-linear-to-b from-[#f4f4f4] to-[#d2d2d2] leading-4">...</button>
          <label className="ml-[19px] flex items-center gap-1">
            <input type="checkbox" className="size-[13px] appearance-none border border-[#8e8f8f] bg-linear-to-br from-[#d5d8db] to-white shadow-[inset_0_0_0_1px_#f4f4f4]" />
            Aktiv
          </label>
        </div>
        <label htmlFor={`${id}-value`} className={`leading-4 ${valueGap}`}>{value}</label>
        <div className="mt-[2px] flex h-[22px] items-end justify-between">
          <input
            id={`${id}-value`}
            disabled={disabled}
            className="h-[21px] w-[290px] self-start border-2 border-[#696969] border-t-[#8a8a8a] border-l-[#8a8a8a] bg-white px-1 shadow-[1px_1px_0_#fff] disabled:bg-[#f0f0f0]"
          />
          <button aria-label="Anwenden" className="flex h-[17px] w-4 items-center justify-center rounded-[3px] border border-[#707070] bg-linear-to-b from-[#f6f6f6] to-[#d8d8d8]">
            <svg viewBox="0 0 8 8" className="size-2"><path d="M1 0v8l6-4z" fill="#7d97d6" stroke="#5f7cc6" /></svg>
          </button>
        </div>
        <div className="mt-2 flex min-h-0 flex-1 flex-col border border-[#828790] bg-white p-px">{children}</div>
      </div>
      <div role="tablist" className="ml-[9px] flex h-[27px] items-start text-[12px]">
        <button role="tab" aria-selected="true" className="-mt-[2px] h-[26px] w-12 rounded-b-[3px] border-r-2 border-b-2 border-l border-r-black border-b-black border-l-white bg-[#f0f0f0] pr-1">Baum</button>
        <button role="tab" aria-selected="false" className="h-[21px] w-[34px] rounded-b-[3px] border-r-2 border-b-2 border-black leading-4">Liste</button>
      </div>
    </section>
  );
}

const pages = [
  "4 Innenansicht Schrank",
  "5 Innenansicht Schrank",
  "6 Seitenansicht",
  "7 Seitenansicht links",
  "8 Seitenansicht rechts",
  "9 Draufsicht",
  "10 Leuchten",
  "11 Montageplatte Frontseite Bestückung",
  "12 Montageplatte Frontseite",
  "13 Montageplatte Rückseite Bestückung",
  "14 Montageplatte Rückseite",
  "15 Detail A",
  "16 Detail B",
  "17 Detail B",
  "18 Erd-/Schirmschienen",
  "19 Detail: -PE1/-PA1",
  "20 Detail: -PE2/-PA2",
  "21 Bohransicht Montageplatte",
];

function PageTree() {
  return (
    <>
      <div className="flex min-h-0 flex-1">
        <ul role="tree" className="min-w-0 flex-1 basis-0 overflow-hidden">
          {pages.map((p) => (
            <li key={p} role="treeitem" className="flex h-[18px] items-center whitespace-nowrap">
              <span className="ml-[28px] h-full w-px shrink-0 border-l border-dotted border-[#9a9a9a]" />
              <span className="ml-[59px] h-full w-px shrink-0 border-l border-dotted border-[#9a9a9a]" />
              <span className="mr-px h-px w-[10px] shrink-0 border-t border-dotted border-[#9a9a9a]" />
              <Icon name="pageGreen" />
              <span className={p.startsWith("19") ? "ml-[6px] font-bold" : "ml-[5px]"}>{p}</span>
            </li>
          ))}
        </ul>
        <div className="flex w-4 flex-col items-center bg-[#f0f0f0]">
          <span className="flex h-[19px] items-center"><Arrow dir="up" /></span>
          <div className="flex flex-1 flex-col self-stretch">
            <div className="flex-[83]" />
            <div className="flex flex-[125] flex-col items-center justify-center gap-[2px] border border-[#989898] bg-linear-to-r from-[#f4f4f4] to-[#cfcfcf]">
              <i className="h-px w-[7px] bg-[#555]" />
              <i className="h-px w-[7px] bg-[#555]" />
              <i className="h-px w-[7px] bg-[#555]" />
            </div>
            <div className="flex-[78]" />
          </div>
          <span className="flex h-3 items-center"><Arrow dir="down" /></span>
        </div>
      </div>
      <div className="flex">
        <div className="flex-1"><HScroll thumb="w-[85%]" /></div>
        <span className="w-4 bg-[#f0f0f0]" />
      </div>
    </>
  );
}

function Expander({ open }: { open: boolean }) {
  return (
    <svg viewBox="0 0 9 9" className="mt-[2px] size-[9px] shrink-0">
      <path d="M.5.5h8v8h-8z" fill="#fff" stroke="#8c8c8c" />
      <path d={open ? "M2 4.500h5" : "M2 4.500h5M4.500 2v5"} stroke="#2b3d7c" />
    </svg>
  );
}

const nodesList = [
  { t: "CSD-8131", icon: "project", pad: "", open: true },
  { t: "CSD-8131", icon: "cubeBlue", pad: "pl-5", open: false, bold: true },
  { t: "CSD-8128", icon: "project", pad: "", open: true },
  { t: "CSD-8128", icon: "cubeBlue", pad: "pl-5", open: true, bold: true, selected: true },
  { t: "S1:Schaltschrank (Topschrank-System lackiert RAL)", icon: "cabinetTree", pad: "pl-10", open: false },
  { t: "MP1:Montageplatte (Rückseite)", icon: "mountTree", pad: "pl-10", open: false },
];

function SpaceTree() {
  return (
    <>
      <ul role="tree" className="min-h-0 flex-1 overflow-hidden">
        {nodesList.map((n, i) => (
          <li key={i} role="treeitem" aria-expanded={n.open} className={`flex h-[18px] items-center whitespace-nowrap ${n.pad}`}>
            <Expander open={n.open} />
            <span className="mt-[2px] mr-px ml-px h-px w-[5px] shrink-0 border-t border-dotted border-[#9a9a9a]" />
            <Icon name={n.icon} />
            <span className={`ml-[3px] h-full flex-1 pl-[3px] leading-[18px] ${n.bold ? "font-bold" : ""} ${n.selected ? "bg-[#e2e2e2]" : ""}`}>{n.t}</span>
          </li>
        ))}
      </ul>
      <HScroll thumb="w-[57%]" />
    </>
  );
}

/* ------------------------------------------------------------------ */
/* 3D view                                                             */
/* ------------------------------------------------------------------ */

function Ln({ d, w = 3, c = "#000", dash }: { d: string; w?: number; c?: string; dash?: string }) {
  return <path d={d} fill="none" stroke={c} strokeWidth={w} strokeDasharray={dash} />;
}
function Pg({ d, f, s, o }: { d: string; f: string; s?: string; o?: number }) {
  return <path d={`M${d}z`} fill={f} stroke={s} strokeWidth={s ? 3 : 0} fillOpacity={o} />;
}
const V = (x: number, y1: number, y2: number) => `M${x} ${y1}V${y2}`;

function Cabinet() {
  return (
    <g transform="translate(840 160) scale(.33333)" shapeRendering="crispEdges">
      <defs>
        <pattern id="fins" width="44" height="18.600" patternUnits="userSpaceOnUse" x="305" y="520">
          <rect width="44" height="18.600" fill="#0b7a40" />
          <path d="M0 0L44 15M0 18.600L44 33.600M0-18.600L44-3.600" stroke="#001a08" strokeWidth="3" />
        </pattern>
        <pattern id="clamps" width="22" height="18.600" patternUnits="userSpaceOnUse" x="348" y="520">
          <rect width="22" height="18.600" fill="#0b4c2b" />
          <path d="M2 0v19M9 0v19M18 0v19" stroke="#000" strokeWidth="4" />
          <path d="M0 3h22M0 13h22" stroke="#000" strokeWidth="3" />
          <path d="M13 0v12M6 5v9" stroke="#5f7066" strokeWidth="3" />
        </pattern>
        <pattern id="edge" width="18" height="18.600" patternUnits="userSpaceOnUse" x="417" y="520">
          <rect width="18" height="18.600" fill="#0c8245" />
          <path d="M0 6L18 0M0 24.600L18 18.600" stroke="#001a08" strokeWidth="4" />
        </pattern>
        <linearGradient id="wall" x1="0" x2="0" y1="0" y2="1">
          <stop offset="0" stopColor="#bcbcbc" />
          <stop offset="1" stopColor="#9f9f9f" />
        </linearGradient>
      </defs>

      {/* side wall and roof interior */}
      <Pg d="700 590L1028 425V2070L858 1985V760L700 700" f="url(#wall)" />
      <Ln d="M985 445V2040" c="#a5a5a5" />
      <Pg d="125 300L508 110L1050 370L665 565" f="#858585" />
      <Pg d="170 305L470 150L508 110L540 150L310 265V325L265 350" f="#b4b4b4" />
      <Pg d="610 445L895 325L1030 375L820 485L665 560L590 500" f="#959595" />
      <Pg d="590 450L680 410L815 470L665 555L590 500" f="#777" />
      <Ln d="M640 430L790 500M665 415L815 475M700 400L880 480M900 330L1030 385M900 342L1000 395" />
      <Ln d="M150 310L480 150M165 318L480 165" w={3} />
      <Pg d="140 300L470 138L480 150V170L400 205L385 190L245 255L250 272L165 310" f="#8d8d8d" />
      <Pg d="245 250L295 228V245L345 222V203L392 180V205L405 210L285 275L245 262" f="#9a9a9a" s="#000" />

      {/* rear cable ducts */}
      <Pg d="248 432L300 415L665 590L815 650V715L760 742L665 700L380 560L248 490" f="#35777a" o={0.85} />
      <Ln d="M248 432L665 625M300 425L665 600M430 560L500 530M510 615L575 585M600 650L640 635M320 470L665 640M370 490L665 655" w={3} />
      <Pg d="248 490L310 460V1940L248 1965" f="#4444bf" s="#000" />
      <Pg d="248 490L310 460L375 492L310 522" f="#0e4c70" s="#000" />
      <Pg d="308 1700H378V1985L330 2015L308 1990" f="#2626a2" s="#000" />
      <Pg d="378 1700H436V2030L378 1995" f="#838383" />
      <Pg d="436 585L505 560V2085L445 2060L436 2030" f="#255f5f" />
      <Pg d="436 1740H443V2030H436" f="#b85f00" />
      <Pg d="443 1740H468V2035H443" f="#3c5c40" />
      <Pg d="505 620L565 590L622 620V2120L578 2150L505 2110" f="#0a1c96" s="#000" />
      <Pg d="577 1450H622V2125L577 2148" f="#2626a2" />
      <Pg d="510 615L565 588L650 628L600 655" f="#12507e" s="#000" />
      <Pg d="693 700L760 660L818 690V2225L765 2240L693 2190" f="#266363" />
      <Pg d="693 715H742V1590H693" f="#255a5a" />
      <Pg d="690 625L815 660L760 685L690 655" f="#2a5c5c" s="#000" />
      <Pg d="695 705L760 685L815 715L760 742" f="#0d6a6a" o={0.7} s="#000" />
      <Pg d="858 635L913 612V668L858 692" f="#35777a" o={0.85} s="#000" />
      <Pg d="858 692L913 668V2160L858 2195" f="#3535b0" s="#000" />
      <Pg d="858 640L913 665L858 692" f="#0e4c70" />
      <Ln d={V(472, 590, 2040) + V(488, 590, 1730) + V(505, 570, 2090) + V(563, 600, 2140) + V(577, 620, 2150)} w={3} />
      <Ln d={V(728, 690, 1595) + V(742, 700, 1590) + V(760, 740, 2230) + V(470, 1740, 2040) + V(456, 1740, 2040)} w={3} />
      {[848, 1140, 1432].map((y) => (
        <Ln key={y} d={`M436 ${y - 10}L472 ${y + 8}L488 ${y}`} w={3} />
      ))}
      {[980, 1130, 1277].map((y) => (
        <Ln key={y} d={`M693 ${y}L728 ${y + 10}L742 ${y + 4}`} w={3} />
      ))}
      <Pg d="445 1700L472 1735L488 1725V1600H445" f="#255f5f" s="#000" />

      {/* terminal strip, left */}
      <Pg d="300 548L368 518L436 550L350 580" f="#067038" s="#000" />
      <Pg d="305 552L348 580V1748L305 1725" f="url(#fins)" />
      <Pg d="348 580L417 568V1735L380 1748H348" f="url(#clamps)" />
      <Pg d="417 568L435 560V1718L417 1735" f="url(#edge)" />
      <Pg d="348 580H354V1746H348" f="#12a152" />
      <Pg d="435 585H445V1700H435" f="#777" />
      <Ln d={V(301, 548, 1725)} w={9} />
      <Ln d={V(357, 580, 1746)} w={4} />
      <Ln d="M298 1725L348 1748H382L417 1735" w={3} />
      <Ln d={V(406, 600, 1730)} w={8} c="#8c8c8c" dash="7 6" />
      <Ln d={V(390, 620, 1735)} w={3} c="#8c8c8c" dash="9 6" />
      {[950, 1245, 1536].map((y) => (
        <Ln key={y} d={`M298 ${y - 45}L348 ${y}H385L436 ${y - 25}`} w={5} />
      ))}
      {/* terminal strip, right */}
      <Pg d="556 675L608 648L693 690L610 710" f="#067038" s="#000" />
      <Pg d="563 683L606 708V1447L563 1428" f="url(#fins)" />
      <Pg d="604 708H617V1447H604" f="#0c8245" />
      <Pg d="640 700H684V1442L640 1447" f="url(#clamps)" />
      <Pg d="684 690H694V1435H684" f="url(#edge)" />
      <Pg d="694 710H704V1420H694" f="#8a8a8a" />
      <Ln d={V(559, 675, 1428)} w={8} />
      <Ln d="M556 1428L606 1449H640L690 1435M556 985L606 1005M556 1282L606 1302" />
      <Pg d="696 1422H702V2155H696" f="#b85f00" />
      <Pg d="703 1450H722V2165H703" f="#3c5c40" />
      <Ln d={V(704, 1440, 2160) + V(713, 1480, 2160) + V(723, 1460, 2165)} w={3} />

      {/* DIN rail brackets and fan below the roof */}
      <Pg d="743 568L802 595V620L743 598" f="#d87200" s="#000" />
      <Ln d="M743 583L802 608" />
      <Pg d="855 535L880 545V578L855 572" f="#d87200" s="#000" />
      <Pg d="870 505L920 510L925 545L905 580L880 590L880 545L865 535" f="#b5b5b5" s="#000" />
      <Ln d="M875 515L910 545M890 505L900 590M865 500H915M880 590L900 560M905 515V560M870 530H920" w={4} />
      <Pg d="690 590L735 560L745 605L715 622" f="#666" s="#000" />
      <Ln d="M690 590L735 620M715 570L735 610" w={6} />

      {/* roof unit */}
      <Pg d="795 345L895 298V366L825 380" f="#7a7a7a" s="#000" />
      <Ln d="M825 335V380" />
      <Pg d="310 295L600 435V445L540 460L330 330L310 325" f="#686868" s="#000" />
      <Pg d="307 265L548 140L855 293L610 413" f="#585858" s="#000" />
      <Pg d="307 265L610 413V443L307 295" f="#707070" s="#000" />
      <Pg d="610 413L855 293V320L610 443" f="#636363" s="#000" />
      <Pg d="604 411H617V440H604" f="#a5a5a5" s="#000" />
      <Pg d="268 355L340 322L590 450L525 485" f="#606060" s="#000" />
      <Pg d="525 485L590 450V500L560 515" f="#7b7b7b" s="#000" />
      <Pg d="262 358L525 488L560 520L262 380" f="#6e6e6e" />
      <Ln d="M330 235L400 205M340 212L395 185M355 215V225M800 430V445M793 436H808" w={4} />
      <Ln d="M255 348L272 334L292 336M255 365L285 345" w={5} />

      {/* roof frame */}
      <Pg d="100 285L508 72L522 95L130 305" f="#6a6a6a" />
      <Ln d="M98 284L508 74" w={5} />
      <Ln d="M102 292L512 88" w={12} />
      <Ln d="M112 304L508 104" w={6} />
      <Ln d="M130 306L500 122" w={5} />
      <Ln d="M520 76L1065 348" w={3} />
      <Ln d="M520 84L1060 356" w={5} c="#9a9a9a" />
      <Ln d="M520 96L1062 370" w={18} />
      <Ln d="M525 114L1050 378" w={5} />
      <Ln d="M535 128L1040 384" w={4} />
      <Pg d="100 300L665 580V605L100 345" f="#888" o={0.8} />
      <Ln d="M100 290L665 570" w={5} />
      <Ln d="M120 296L665 566" w={3} c="#8f8f8f" />
      <Ln d="M100 304L665 585" w={16} />
      <Ln d="M110 322L665 599M105 334L660 606M105 348L640 612" w={4} />
      <Pg d="665 560L1065 370L1065 395L690 605" f="#808080" o={0.9} />
      <Ln d="M670 558L1050 372" w={6} />
      <Ln d="M675 574L1060 385" w={11} />
      <Ln d="M688 592L1060 402M690 604L1060 416" w={4} />
      <Pg d="480 110L545 120V145L515 165L485 170" f="#3a3a3a" />
      <Ln d={V(480, 100, 175) + V(490, 100, 170) + V(500, 95, 160) + V(523, 95, 150) + V(536, 100, 145)} w={5} />
      <Pg d="595 490L635 485L665 500L715 530L720 550L690 600L640 605L580 560L575 535" f="#1a1a1a" />
      <Ln d="M582 500L700 530M600 490L640 580M640 485L620 590M575 530L690 510" w={7} />
      <Ln d="M605 505L625 500M640 520L655 512M660 545L685 540M612 545L640 550M622 525L635 530M680 520L700 528M650 575L668 580" w={4} c="#9a9a9a" />
      <Ln d="M648 520L656 528M700 560L712 552" w={4} c="#3a46c0" />
      <Pg d="92 285L130 290L120 340L92 330" f="#0a0a0a" />
      <Pg d="1020 365L1065 345L1075 400L1035 405" f="#0a0a0a" />
      {/* lifting eyes */}
      {[[508, 60], [116, 258], [1050, 333]].map(([x, y]) => (
        <g key={x}>
          <path d={`M${x - 13} ${y + 16}l-5-18 12-16 14-4 8 16-6 22z`} fill="none" stroke="#000" strokeWidth="11" />
          <path d={`M${x - 13} ${y + 16}l-5-18 12-16 14-4 8 16-6 22z`} fill="none" stroke="#d4d4d4" strokeWidth="5" />
        </g>
      ))}

      {/* rails across the sides */}
      <Pg d="108 1163L248 1095V1135L118 1203" f="#6b6b6b" s="#000" />
      <Pg d="248 1095L297 1070V1112L248 1135" f="#1b1b9c" s="#000" />
      <Ln d="M120 1172L297 1085" w={3} />
      <Pg d="100 1165H118V1203H100" f="#333" />

      {/* rear right post */}
      <Pg d="816 490H857V2230L830 2240L816 2225" f="#8e8e8e" />
      <Ln d={V(822, 490, 2230)} w={12} />
      <Ln d={V(840, 500, 2230)} w={5} />
      <Ln d={V(855, 500, 2215)} w={6} />
      <Ln d={V(311, 430, 545) + V(309, 1750, 1930) + V(323, 1750, 1930)} w={4} />

      {/* front post */}
      <Pg d="622 590H688V2340H622" f="#747474" />
      <Pg d="652 1440H662V2330H652" f="#989898" />
      <Ln d={V(624, 590, 2340)} w={6} />
      <Ln d={V(634, 600, 2340) + V(646, 600, 2340)} w={5} />
      <Ln d={V(668, 600, 2360)} w={13} />
      <Ln d={V(684, 600, 2340)} w={6} />
      <Pg d="618 710H650V1445H618" f="#000" />
      <Ln d={V(654, 700, 1440)} w={4} c="#777" dash="9 7" />

      {/* side posts */}
      <Pg d="92 300H117V2060H92" f="#b8b8b8" />
      <Ln d={V(96, 290, 2070)} w={11} />
      <Ln d={V(107, 320, 2060) + V(116, 340, 2050)} w={4} />
      <Pg d="1028 400H1094V2130H1028" f="#9b9b9b" />
      <Pg d="1068 352L1094 360V2140H1068" f="#b0b0b0" />
      <Ln d={V(1028, 420, 2060) + V(1040, 410, 2070) + V(1048, 400, 2080)} w={3} />
      <Ln d={V(1060, 380, 2150)} w={17} />
      <Ln d={V(1074, 400, 2130)} w={5} />
      <Ln d={V(1091, 358, 2140)} w={8} />
      <Ln d="M1068 352L1094 360M1072 400L1088 405M1070 2130L1094 2140" />

      <Pg d="665 1460L1050 1265V1307L690 1487" f="#6b6b6b" s="#000" />
      <Ln d="M665 1465L1050 1272M680 1478L1050 1292M690 1487L1050 1305" w={5} />
      <Pg d="655 1458H690V1480L680 1492L655 1482" f="#000" />
      {/* hinges */}
      {[340, 877, 1417, 1957].map((y) => (
        <g key={y}>
          <path d={`M62 ${y + 22}v-12l14-8h16M62 ${y + 62}v-12l14-8h16`} fill="none" stroke="#000" strokeWidth="13" />
          <path d={`M62 ${y + 18}v-6l14-8h12M62 ${y + 58}v-6l14-8h12`} fill="none" stroke="#8a8a8a" strokeWidth="5" />
          <path d={V(62, y + 20, y + 45)} stroke="#555" strokeWidth="4" />
        </g>
      ))}
      {/* door handle */}
      <path d="M1070 1160H1085L1103 1200L1112 1240V1355L1095 1360V1230L1082 1200V1380L1112 1360V1410L1100 1422H1070" fill="none" stroke="#000" strokeWidth="4" />
      <Ln d={V(1095, 1215, 1355) + V(1080, 1200, 1340)} w={11} />
      <Ln d="M1072 1215H1095M1072 1300H1090M1075 1330H1095M1078 1380H1100V1395H1082" w={5} />

      {/* plinth */}
      <Pg d="80 2078L670 2370V2455L140 2195L80 2165" f="#a0a0a0" s="#000" />
      <Pg d="670 2370L1082 2165V2252L670 2455" f="#a0a0a0" s="#000" />
      <Pg d="180 2150L600 2345L600 2400L180 2205" f="#ababab" />
      <Pg d="715 2375L1000 2235V2265L715 2405" f="#c2c2c2" />
      <Ln d="M80 2160L665 2450M190 2190L610 2400M150 2200L640 2440" w={5} />
      <Ln d="M672 2452L1082 2250M700 2425L1035 2270M710 2410L1030 2255" w={5} />
      <Ln d="M700 2435L1035 2272" w={6} c="#d4d4d4" dash="28 10" />

      {/* floor frame */}
      <Pg d="210 2110L345 2000L480 2060L820 2230L700 2300L640 2320" f="#cbcbcb" />
      <Pg d="100 2040L310 1930L340 1945L345 2005L180 2110L92 2070" f="#858585" o={0.8} />
      <Ln d="M100 2035L308 1928M108 2050L300 1948M205 2090L345 2020M200 2075L330 2005M150 2080L320 1990" w={4} />
      <Ln d="M110 2064L300 1966" w={11} />
      <Ln d="M120 2082L290 1996" w={8} />
      <Pg d="858 1962L1060 2080V2150L858 2050" f="#8a8a8a" o={0.5} />
      <Ln d="M858 1960L1060 2060M858 1980L1060 2080M858 2000L1000 2070M858 2020L1050 2115M858 2090L1000 2160M860 2140L960 2190" w={4} />
      <Ln d="M858 2042L1050 2138M858 2062L1045 2157" w={8} />
      <Pg d="250 2045L262 2040L845 2325L840 2345L640 2255L262 2070" f="#2a6566" s="#000" />
      <Ln d="M258 2052L842 2336" w={3} />
      <Pg d="345 2005L365 1998L830 2225L800 2240L640 2175L350 2028" f="#2a6566" o={0.9} s="#000" />
      <Pg d="445 2050L505 2085V2110L580 2145L620 2128V2150L575 2168L445 2090" f="#0d7474" o={0.7} s="#000" />
      <Pg d="508 2045H620V2130L578 2150L508 2110" f="#0b1d9e" />
      <Ln d="M445 2040L622 2128M508 2060V2110M563 2040V2140M577 2040V2148M600 2110V2140" w={3} />
      <Pg d="703 2195L765 2215L815 2225L760 2240L703 2212" f="#0d7474" s="#000" />
      <Pg d="100 2070L660 2340V2375L92 2100" f="#555" />
      <Ln d="M95 2062L650 2335" w={5} />
      <Ln d="M95 2080L655 2352" w={18} />
      <Ln d="M100 2102L655 2370" w={12} />
      <Ln d="M240 2112L640 2308" w={14} c="#8a8a8a" />
      <Ln d="M235 2122L640 2320M250 2106L640 2298M290 2110L640 2284" w={4} />
      <Pg d="690 2310L980 2150L1070 2150V2175L690 2365" f="#555" />
      <Ln d="M690 2298L985 2153M700 2320L1060 2146" w={5} />
      <Ln d="M690 2337L1075 2150" w={18} />
      <Ln d="M690 2356L1080 2167" w={10} />
      <Pg d="720 2290L960 2170L975 2178L735 2300" f="#8f8f8f" s="#000" />

      {/* brackets and corner blocks */}
      <Pg d="300 1960L312 1925L338 1945L335 1990L355 2000L310 2018L290 2000" f="#2525a0" s="#000" />
      <Ln d="M300 1930L330 1960M290 1965L335 1935M318 1930V1990M275 1950H300M337 1920V1950M275 2000L300 2015M340 1980L372 1995" w={6} />
      <Pg d="770 2165L800 2160L803 2215L775 2222L765 2200" f="#2a6566" s="#000" />
      <Ln d="M785 2150L790 2165M803 2105V2112M800 2135V2142M770 2180L800 2190M785 2165V2220" w={5} />
      <Pg d="325 2000H345V2055H325" f="#8b8b8b" s="#000" />
      <Ln d={V(336, 1975, 2055) + V(265, 2000, 2050)} w={4} />
      <Pg d="92 2040L145 2060L185 2110L180 2195L140 2195L122 2130L80 2100" f="#0c0c0c" />
      <Pg d="82 2085H120V2150L140 2190L82 2162" f="#9c9c9c" s="#000" />
      <Ln d="M125 2110L170 2130M130 2150L178 2165M150 2080V2190M95 2075L145 2085" w={4} c="#8c8c8c" dash="9 8" />
      <Pg d="622 2325L700 2330L718 2425L670 2455L612 2425L580 2390V2350L622 2355" f="#8f8f8f" s="#000" />
      <Ln d="M622 2330L700 2350M615 2350V2420M640 2355V2420M655 2360V2430M690 2350V2430M708 2350V2420M612 2425L700 2420M580 2350H620M640 2340L720 2320" w={9} />
      <Ln d={V(700, 2350, 2420)} w={5} c="#999" dash="9 9" />
      <Pg d="618 2310H700L715 2325L690 2365H625" f="#000" />
      <Pg d="586 2370H602V2390H586" f="#000" />
      <Pg d="975 2150L1070 2140L1082 2165L1040 2185L1040 2270L1000 2250L975 2230" f="#151515" />
      <Ln d="M985 2165L1030 2250M1020 2170V2260M985 2200L1030 2190" w={5} c="#888" dash="8 8" />
      <Pg d="1042 2185L1082 2165V2250L1042 2270" f="#a8a8a8" s="#000" />
      <Pg d="815 2230H835V2370H815" f="#888" s="#000" />
      <Pg d="892 2235H908V2330H892" f="#888" s="#000" />
      <Pg d="870 2265L890 2258V2290L865 2285" f="#5f8787" s="#000" />
      {/* ventilation blocks */}
      {[[165, 2035, 85], [495, 2205, 86], [918, 2018, 80]].map(([x, y, w]) => (
        <g key={x}>
          <Pg d={`${x} ${y}L${x + w} ${y + w / 2}V${y + w / 2 + 30}L${x} ${y + 36}`} f="#757575" s="#000" />
          {[1, 2, 3, 4, 5, 6, 7].map((k) => (
            <Ln key={k} d={`M${x + (w * k) / 8} ${y + (w * k) / 16}v34`} w={3} />
          ))}
        </g>
      ))}
      <Pg d="262 2108L285 2100L290 2128L268 2136" f="#a5a5a5" s="#000" />
      <Pg d="590 2275L615 2270L622 2300L596 2305" f="#a5a5a5" s="#000" />
      <Pg d="985 2080L1008 2072L1010 2095L990 2102" f="#a5a5a5" s="#000" />
      <Ln d="M243 2095L262 2104M575 2262L592 2270" w={5} c="#5a0f1c" />

      {/* floor markings */}
      <Ln d="M505 2138L550 2150" w={22} c="#1c1cae" dash="4 6" />
      <Ln d="M478 2150L575 2195" w={16} c="#1c1cae" dash="4 7" />
      <Ln d="M418 2172L490 2205" w={18} c="#1c1cae" dash="5 4" />
      <Ln d="M585 2255L630 2265" w={16} c="#1c1cae" dash="4 4" />
      <Ln d="M470 2170L590 2228" w={8} c="#9dbcb4" dash="4 7" />
      <Ln d="M465 1345V1355M475 1348V1358M541 1375V1388M280 1245H284M286 1262H290M733 1472V1485" c="#1c1cae" w={4} />
      <Ln d="M375 490L430 520M380 505L430 530M500 585L510 600M650 645L670 650" c="#1b2b9a" w={4} />
    </g>
  );
}

function Axes() {
  return (
    <g>
      <path d="M478 945v-17" stroke="#0a0ab8" strokeWidth="3" />
      <path d="M474 930l4-11 4 11z" fill="#0a0ab8" />
      <path d="M479 944l12-6" stroke="#0c8a12" strokeWidth="3" />
      <path d="M500 934l-7 8-4-5z" fill="#0c8a12" />
      <path d="M479 945l12 5" stroke="#8a0a0a" strokeWidth="3" />
      <path d="M500 956l-11-1 4-7z" fill="#c40808" />
    </g>
  );
}

function Workspace() {
  return (
    <main className="flex min-w-0 flex-1 flex-col bg-[#f0f0f0] pt-2 pr-[7px] pl-[9px]">
      <div className="flex min-h-0 flex-1 flex-col border-t border-r-2 border-b-2 border-l border-t-white border-r-black border-b-black border-l-white p-[5px]">
        <div className="min-h-0 flex-1 border-t border-r-2 border-b-2 border-l border-t-[#696969] border-r-white border-b-white border-l-[#696969] bg-linear-to-b from-white to-[#bebebe]">
          <svg viewBox="403 161 1261 835" preserveAspectRatio="xMidYMid meet" role="img" aria-label="CSD-8128" className="block h-full w-full">
            <Cabinet />
            <Axes />
          </svg>
        </div>
      </div>
      <div role="tablist" className="ml-[5px] flex h-6 items-start font-['Liberation_Sans',Arial,sans-serif] text-[11px]">
        <button role="tab" aria-selected="false" className="flex h-[21px] w-[89px] items-center gap-[3px] rounded-bl-[3px] border-r-2 border-b-2 border-black pl-px">
          <Icon name="cubeGhost" />
          MP1:Monta...
        </button>
        <button role="tab" aria-selected="false" className="flex h-[21px] w-[89px] items-center gap-[5px] rounded-bl-[3px] border-b-2 border-black pl-[3px]">
          <Icon name="blankPage" />
          <span>=A1+S1<span className="underline">E</span>T...</span>
        </button>
        <button role="tab" aria-selected="true" className="-mt-[2px] flex h-[25px] w-[93px] items-center gap-3 rounded-bl-[3px] border-r-2 border-b-2 border-black bg-[#f0f0f0] pl-[2px]">
          <Icon name="cubeGhost" />
          CSD-8128
        </button>
      </div>
    </main>
  );
}

function DrawBar() {
  return (
    <div className="w-[35px] shrink-0 border-l-2 border-[#6f727c] bg-[#d5daec]">
      <div role="toolbar" className="flex flex-col items-center border-r border-b border-r-white border-b-[#9da6c8] bg-linear-to-b from-white via-[#d5daec] via-5% to-[#d8ddef] pt-1 pr-px pb-[6px]">
        <span className="mb-[2px] h-px w-[22px] border-t border-dotted border-[#8f94a8]" />
        {drawTools.split(" ").map((n, i) =>
          n === "|" ? (
            <span key={i} className="mt-1 mb-[3px] h-px w-6 bg-[#abaeba]" />
          ) : (
            <button key={i} aria-label={n} className="flex h-[23px] w-6 items-center justify-center">
              <Icon name={n} />
            </button>
          ),
        )}
      </div>
    </div>
  );
}

function StatusBar() {
  const cell = "h-full border-l border-[#b9bdcb] pl-1";
  return (
    <footer className="flex h-[21px] shrink-0 items-center border-t border-b border-t-[#9a9ca6] border-b-[#aeb2c6] bg-linear-to-b from-white via-[#d5daec] via-60% to-[#dde1f1] text-[12px] leading-6">
      <div className="flex h-full min-w-0 flex-1 gap-3 pl-[2px] whitespace-pre">
        <span>X:  938,72 mm</span>
        <span>Y:  -2940,26 mm</span>
        <span>Z:  3820,39 mm</span>
      </div>
      <span className={`w-[428px] ${cell}`} />
      <span className={`w-[194px] ${cell}`}>EIN: 10,00 mm</span>
      <span className={`w-[113px] ${cell}`}>Grafik 1:1</span>
      <span className={`w-[75px] ${cell}`} />
      <span className={`w-[55px] ${cell}`} />
    </footer>
  );
}

export default function App() {
  return (
    <div className="flex h-screen flex-col overflow-hidden bg-[#d5daec] font-[Roboto,'Open_Sans',sans-serif] text-black">
      <TitleBar />
      <MenuBar />
      <div className="shrink-0 border-b border-[#b4b8ca]">
        <ToolRow groups={row1} />
        <ToolRow groups={row2} />
        <ToolRow groups={row3} className="pl-[2px]" />
      </div>
      <div className="flex min-h-0 flex-1">
        <aside className="flex w-[352px] shrink-0 flex-col bg-[#dfe3f2] pr-1 pl-1">
          <Panel id="pages" title="Seiten" filter="Entwurfsmodus" value="Wert:" disabled grow="flex-[492]" labelPad="pt-1" comboGap="mt-[7px]" valueGap="mt-[7px]">
            <PageTree />
          </Panel>
          <div className="h-[5px] shrink-0 border-t border-b-2 border-t-[#b9bfd4] border-b-[#7d808a] bg-[#dfe3f2]" />
          <Panel id="space" title="Bauraum - CSD-8128" filter="Einbauort" value="Wert: Einbauort <1220> =" grow="flex-[385]" labelPad="pt-[10px]" comboGap="mt-[4px]" valueGap="mt-[6px]">
            <SpaceTree />
          </Panel>
        </aside>
        <DrawBar />
        <Workspace />
      </div>
      <StatusBar />
    </div>
  );
}
